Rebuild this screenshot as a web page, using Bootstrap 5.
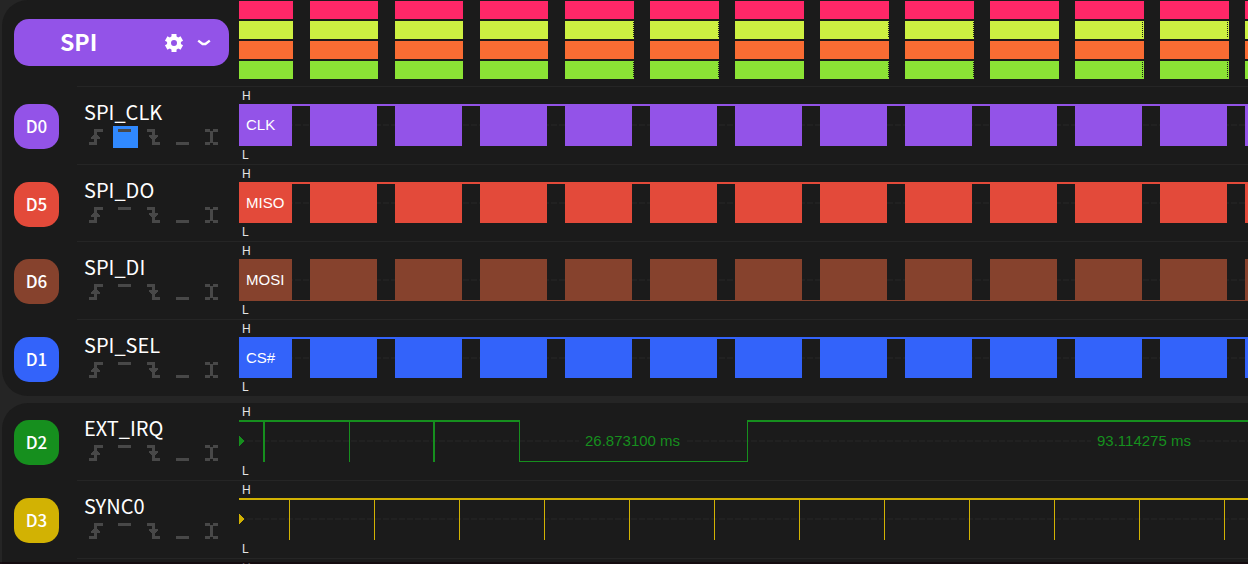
<!DOCTYPE html>
<html lang="en" data-bs-theme="dark">
<head>
<meta charset="utf-8">
<meta name="viewport" content="width=device-width, initial-scale=1">
<title>Logic analyzer</title>
<link href="https://cdn.jsdelivr.net/npm/bootstrap@5.3.0/dist/css/bootstrap.min.css" rel="stylesheet">
<style>
  :root { --panel: #1b1b1b; --gutter: #252525; --rule: #252525; --glyph: #484848; }
  body { background: var(--gutter); color: #ececec; font-family: "Noto Sans CJK SC", sans-serif; }
  .analyzer { padding-left: 2px; gap: 7px; }
  .panel { background: var(--panel); border-radius: 26px 0 0 26px; }
  .bus-side { width: 237px; padding: 19px 10px 20px 12px; }
  .bus { height: 47px; border-radius: 15px; background: #9353e8; padding: 0 14px 0 46px; }
  .bus-name { font-size: 23px; line-height: 44px; height: 47px; font-weight: 700; color: #fff; margin: 0; }
  .bus-btn { width: 22px; height: 22px; color: #fff; }
  .badge-side { width: 75px; padding: 18px 0 0 12px; }
  .chip { width: 45px; height: 45px; border-radius: 15px; font-size: 17px; line-height: 43px; font-weight: 500; color: #fff; }
  .channel-body { border-top: 1px solid var(--rule); min-width: 0; }
  .channel:first-child .channel-body { border-top: 0; }
  .channel:first-child .badge-side { padding-top: 17px; }
  .label-side { width: 162px; padding: 13px 0 0 7px; }
  .channel-name { font-size: 20px; line-height: 24px; font-weight: 400; margin: 0 0 2px; }
  .trigger { width: 25px; height: 22px; color: var(--glyph); }
  .trigger[aria-pressed="true"] { background: #3089ff; }
  .plot { min-width: 0; overflow: hidden; }
  .level { font: 12px/17px "Liberation Sans", sans-serif; padding-left: 3px; color: #e4e4e4; }
  .level-high { line-height: 16px; padding-top: 1px; }
  .level-low { line-height: 18px; }
  .wave text { font: 15px "Liberation Sans", sans-serif; }
  .footline { height: 2px; background: rgba(16, 4, 10, .6); }
</style>
</head>
<body>
<svg width="0" height="0" class="position-absolute" aria-hidden="true">
  <defs>
    <symbol id="t-rise" viewBox="0 0 15 16"><path d="M5 0h9v3H8v2l3 4v1H8v6H0v-3h5v-3H2V9l3-4z" fill="currentColor"/></symbol>
    <symbol id="t-high" viewBox="0 0 15 16"><path d="M0 0h13v3H0z" fill="currentColor"/></symbol>
    <symbol id="t-fall" viewBox="0 0 15 16"><path d="M0 0h8v6h3v1L8 11v2h5v3H5v-5L2 7V6h3V3H0z" fill="currentColor"/></symbol>
    <symbol id="t-low" viewBox="0 0 15 16"><path d="M0 13h13v3H0z" fill="currentColor"/></symbol>
    <symbol id="t-both" viewBox="0 0 15 16"><path d="M0 0h5v2h3V0h5v3H8v10h5v3H8v-2H5v2H0v-3h5V3H0z" fill="currentColor"/></symbol>
  </defs>
</svg>

<main class="analyzer d-flex flex-column vh-100 overflow-hidden">
  <section class="panel flex-shrink-0" aria-label="SPI bus">
    <div class="bus-head d-flex">
      <div class="bus-side flex-shrink-0">
        <div class="bus d-flex align-items-center">
          <h1 class="bus-name flex-fill">SPI</h1>
          <button type="button" class="bus-btn btn border-0 p-0 me-2 d-flex align-items-center justify-content-center" aria-label="Settings">
            <svg width="20" height="20" viewBox="0 0 20 20" fill="none" stroke="currentColor"><circle cx="10" cy="10" r="5" stroke-width="4"/><path d="M10 1v4M10 15v4M2.2 5.5l3.5 2M14.3 12.5l3.5 2M2.2 14.5l3.5-2M14.3 7.5l3.5-2" stroke-width="5"/></svg>
          </button>
          <button type="button" class="bus-btn btn border-0 p-0 d-flex align-items-center justify-content-center" aria-label="Collapse bus">
            <svg width="14" height="8" viewBox="0 0 14 8" fill="none" stroke="currentColor" stroke-width="2.4"><path d="M1.2 1.6L5.6 5h2.8l4.4-3.4"/></svg>
          </button>
        </div>
      </div>
      <div class="plot flex-fill"><svg id="frames" class="d-block" width="100%" height="80" shape-rendering="crispEdges" aria-label="Decoded frames"></svg></div>
    </div>
    <div id="spi-channels"></div>
  </section>
  <section class="panel flex-fill" aria-label="Other channels">
    <div id="other-channels"></div>
  </section>
</main>
<div class="footline fixed-bottom"></div>

<script src="https://cdn.jsdelivr.net/npm/bootstrap@5.3.0/dist/js/bootstrap.bundle.min.js"></script>
<script>
  const PERIOD = 85, FIRST = 71, COUNT = 40;
  const starts = Array.from({ length: COUNT }, (_, i) => FIRST + i * PERIOD);

  // Decoder lanes: one box for each transfer, the lane colour marks its kind.
  const lanes = ['#ff2768', '#cdf041', '#f96c33', '#8be335'];
  document.getElementById('frames').innerHTML = lanes.map((color, lane) => {
    const y = 1 + lane * 20;
    const boxes = starts.map((x, i) => `M${x} ${y}h${i < 3 ? 68 : 69}v18h-${i < 3 ? 68 : 69}z`).join('');
    const marks = lane % 2 === 0 ? '' : starts.map((x, i) => {
      if (i < 3 || i === 5 || i === 8) return '';
      const at = x + (i > 8 ? 67.5 : 68.5);
      return `<path d="M${at} ${y + 1}v16" stroke="#1b1b1b" stroke-dasharray="1 1"/>`;
    }).join('');
    return `<path fill="${color}" d="M0 ${y}h54v18H0z${boxes}"/>${marks}`;
  }).join('');

  const bursts = h => 'M0 0h53v' + h + 'H0z' + starts.map(x => `M${x} 0h67v${h}h-67z`).join('');
  const burstWave = (name, h, idle) => c =>
    `<path fill="${c}" d="${bursts(h)}"/><rect y="${idle === 'high' ? 0 : h - 1}" width="100%" height="${idle === 'high' ? 2 : 1}" fill="${c}"/>` +
    `<text x="7" y="26" fill="#fff">${name}</text>`;
  const cursor = c => `<path d="M0 16l5 5-5 5z" fill="${c}"/>`;

  const irqWave = c => cursor(c) +
    `<path fill="${c}" d="M0 0h281v42h-1V2H0zM24 2h2v40h-2zM110 2h1v40h-1zM194 2h2v40h-2zM281 41h227V0h1v42H281z"/>` +
    `<rect x="508" width="100%" height="2" fill="${c}"/>` +
    `<rect x="340" y="12" width="106" height="18" fill="#1b1b1b"/><rect x="852" y="12" width="106" height="18" fill="#1b1b1b"/>` +
    `<text x="346" y="26" fill="${c}">26.873100 ms</text><text x="858" y="26" fill="${c}">93.114275 ms</text>`;
  const syncWave = c => cursor(c) + `<rect width="100%" height="2" fill="${c}"/>` +
    `<path fill="${c}" d="${starts.map(x => `M${x - 21} 2h1v40h-1z`).join('')}"/>`;

  const triggers = [['rise', 'Rising edge'], ['high', 'High level'], ['fall', 'Falling edge'], ['low', 'Low level'], ['both', 'Either edge']];

  const channel = ch => `
    <div class="channel d-flex">
      <div class="badge-side flex-shrink-0"><div class="chip text-center" style="background:${ch.color}">${ch.id}</div></div>
      <div class="channel-body d-flex flex-fill">
        <div class="label-side flex-shrink-0">
          <h2 class="channel-name">${ch.name}</h2>
          <div class="d-flex gap-1" role="group" aria-label="${ch.name} trigger">
            ${triggers.map(([key, title]) => `<button type="button" class="trigger btn border-0 rounded-0 p-0 d-flex align-items-center justify-content-center" aria-label="${title}" aria-pressed="${ch.trigger === key}"><svg width="15" height="16" shape-rendering="crispEdges"><use href="#t-${key}"/></svg></button>`).join('')}
          </div>
        </div>
        <div class="plot flex-fill">
          <div class="level level-high">H</div>
          <svg class="wave d-block" width="100%" height="${ch.h}" shape-rendering="crispEdges" aria-label="${ch.name} waveform">
            <line x1="0" y1="21" x2="100%" y2="21" stroke="#212121" stroke-width="2" stroke-dasharray="6 2"/>${ch.wave(ch.color)}
          </svg>
          <div class="level level-low">L</div>
        </div>
      </div>
    </div>`;

  document.getElementById('spi-channels').outerHTML = [
    { id: 'D0', name: 'SPI_CLK', color: '#9353e8', h: 42, trigger: 'high', wave: burstWave('CLK', 42, 'high') },
    { id: 'D5', name: 'SPI_DO', color: '#e34a3a', h: 41, wave: burstWave('MISO', 41, 'high') },
    { id: 'D6', name: 'SPI_DI', color: '#86422d', h: 42, wave: burstWave('MOSI', 42, 'low') },
    { id: 'D1', name: 'SPI_SEL', color: '#3363fa', h: 41, wave: burstWave('CS#', 41, 'high') }
  ].map(channel).join('');

  document.getElementById('other-channels').outerHTML = [
    { id: 'D2', name: 'EXT_IRQ', color: '#168f1e', h: 42, wave: irqWave },
    { id: 'D3', name: 'SYNC0', color: '#d2b203', h: 42, wave: syncWave },
    { id: 'D4', name: 'SYNC1', color: '#2aa3a3', h: 42, wave: syncWave }
  ].map(channel).join('');
</script>
</body>
</html>
